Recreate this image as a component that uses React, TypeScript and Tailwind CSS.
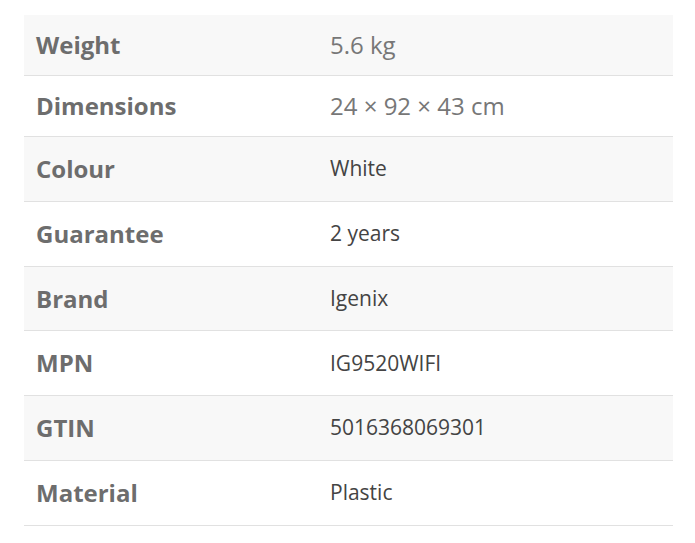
const rows = [
  { label: "Weight", value: "5.6 kg", big: true },
  { label: "Dimensions", value: "24 × 92 × 43 cm", big: true },
  { label: "Colour", value: "White" },
  { label: "Guarantee", value: "2 years" },
  { label: "Brand", value: "Igenix" },
  { label: "MPN", value: "IG9520WIFI" },
  { label: "GTIN", value: "5016368069301" },
  { label: "Material", value: "Plastic" },
];

export default function App() {
  return (
    <div className="min-h-screen bg-white pl-6 pr-[22px] pt-[15px] font-['Open_Sans',sans-serif]">
      <div className="flex flex-col">
        {rows.map((row, i) => (
          <div
            key={row.label}
            className={`flex items-center border-b border-[#e1e1e1] ${
              row.big ? "h-[61px]" : "h-[64.84px]"
            } ${i % 2 === 0 ? "bg-[#f8f8f8]" : "bg-white"}`}
          >
            <div className="w-[293px] pl-[12px] text-[24px] font-bold text-[#6d6d6d]">
              {row.label}
            </div>
            <div
              className={
                row.big
                  ? "pl-[13px] text-[24px] text-[#777]"
                  : "pl-[13px] text-[21px] text-[#444]"
              }
            >
              {row.value}
            </div>
          </div>
        ))}
      </div>
    </div>
  );
}
